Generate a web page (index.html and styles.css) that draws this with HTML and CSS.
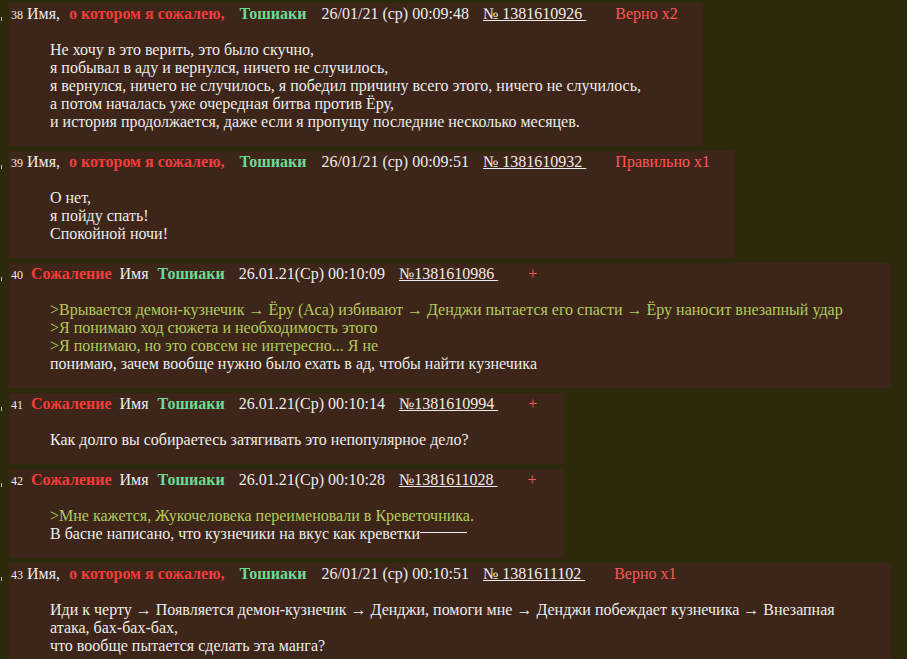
FILE: index.html
```
<!DOCTYPE html>
<html lang="ru">
  <head>
    <meta charset="UTF-8" />
    <meta name="viewport" content="width=device-width, initial-scale=1.0" />
    <title>тред</title>
    <link rel="stylesheet" href="styles.css">
  </head>
  <body>
    <div class="thread">
      <div class="post-row">
        <span class="side"><i></i></span>
        <div class="post">
          <div class="post-head">
            <span class="num">38</span>
            <span class="name">Имя,</span>
            <span class="title">о котором я сожалею,</span>
            <span class="trip">Тошиаки</span>
            <span class="date">26/01/21 (ср) 00:09:48</span>
            <a class="ref">№ 1381610926&nbsp;</a>
            <span class="vote">Верно x2</span>
          </div>
          <div class="message">
            Не хочу в это верить, это было скучно,<br>
            я побывал в аду и вернулся, ничего не случилось,<br>
            я вернулся, ничего не случилось, я победил причину всего этого, ничего не случилось,<br>
            а потом началась уже очередная битва против Ёру,<br>
            и история продолжается, даже если я пропущу последние несколько месяцев.
          </div>
        </div>
      </div>

      <div class="post-row">
        <span class="side"><i></i></span>
        <div class="post">
          <div class="post-head">
            <span class="num">39</span>
            <span class="name">Имя,</span>
            <span class="title">о котором я сожалею,</span>
            <span class="trip">Тошиаки</span>
            <span class="date">26/01/21 (ср) 00:09:51</span>
            <a class="ref">№ 1381610932&nbsp;</a>
            <span class="vote">Правильно x1</span>
          </div>
          <div class="message">
            О нет,<br>
            я пойду спать!<br>
            Спокойной ночи!
          </div>
        </div>
      </div>

      <div class="post-row">
        <span class="side"><i></i></span>
        <div class="post post-full">
          <div class="post-head alt">
            <span class="num">40</span>
            <span class="title">Сожаление</span>
            <span class="name">Имя</span>
            <span class="trip">Тошиаки</span>
            <span class="date">26.01.21(Ср) 00:10:09</span>
            <a class="ref">№1381610986&nbsp;</a>
            <span class="plus">+</span>
          </div>
          <div class="message">
            <span class="quote">&gt;Врывается демон-кузнечик → Ёру (Аса) избивают → Денджи пытается его спасти → Ёру наносит внезапный удар</span><br>
            <span class="quote">&gt;Я понимаю ход сюжета и необходимость этого</span><br>
            <span class="quote">&gt;Я понимаю, но это совсем не интересно... Я не</span><br>
            понимаю, зачем вообще нужно было ехать в ад, чтобы найти кузнечика
          </div>
        </div>
      </div>

      <div class="post-row">
        <span class="side"><i></i></span>
        <div class="post">
          <div class="post-head alt">
            <span class="num">41</span>
            <span class="title">Сожаление</span>
            <span class="name">Имя</span>
            <span class="trip">Тошиаки</span>
            <span class="date">26.01.21(Ср) 00:10:14</span>
            <a class="ref">№1381610994&nbsp;</a>
            <span class="plus">+</span>
          </div>
          <div class="message">
            Как долго вы собираетесь затягивать это непопулярное дело?
          </div>
        </div>
      </div>

      <div class="post-row">
        <span class="side"><i></i></span>
        <div class="post">
          <div class="post-head alt">
            <span class="num">42</span>
            <span class="title">Сожаление</span>
            <span class="name">Имя</span>
            <span class="trip">Тошиаки</span>
            <span class="date">26.01.21(Ср) 00:10:28</span>
            <a class="ref">№1381611028&nbsp;</a>
            <span class="plus">+</span>
          </div>
          <div class="message">
            <span class="quote">&gt;Мне кажется, Жукочеловека переименовали в Креветочника.</span><br>
            В басне написано, что кузнечики на вкус как креветки<span class="strike"></span>
          </div>
        </div>
      </div>

      <div class="post-row">
        <span class="side"><i></i></span>
        <div class="post post-full">
          <div class="post-head">
            <span class="num">43</span>
            <span class="name">Имя,</span>
            <span class="title">о котором я сожалею,</span>
            <span class="trip">Тошиаки</span>
            <span class="date">26/01/21 (ср) 00:10:51</span>
            <a class="ref">№ 1381611102&nbsp;</a>
            <span class="vote">Верно x1</span>
          </div>
          <div class="message">
            Иди к черту → Появляется демон-кузнечик → Денджи, помоги мне → Денджи побеждает кузнечика → Внезапная<br>
            атака, бах-бах-бах,<br>
            что вообще пытается сделать эта манга?
          </div>
        </div>
      </div>
    </div>
  </body>
</html>
```

FILE: styles.css
```
body {
  margin: 0;
  background-color: #2d2a0b;
  color: #ececec;
  font-family: "Liberation Serif", "Times New Roman", serif;
  font-size: 16px;
  line-height: 18px;
}

.thread {
  padding: 3px 16px 0 0;
}

.post-row {
  display: flex;
  align-items: flex-start;
  margin-bottom: 5px;
}

.side {
  flex: 0 0 9px;
  height: 20px;
}

.side i {
  display: block;
  width: 1px;
  height: 4px;
  margin: 14px 0 0 1px;
  background-color: #bdbdbd;
}

.post {
  min-width: 0;
  background-color: #3d2619;
  padding: 2px 25px 0 2px;
}

.post-full {
  flex: 1;
}

.post-head {
  display: flex;
  align-items: baseline;
  white-space: nowrap;
  height: 20px;
}

.num {
  font-size: 12px;
  margin-right: 4px;
}

.post-head .name {
  margin-right: 9px;
}

.post-head .title {
  color: #f23c3c;
  font-weight: bold;
  margin-right: 15px;
}

.trip {
  color: #6ddb97;
  font-weight: bold;
  margin-right: 15px;
}

.date {
  margin-right: 14px;
}

.ref {
  color: #ececec;
  text-decoration: underline;
  margin-right: 29px;
}

.vote {
  color: #ff5656;
}

.alt .num {
  margin-right: 8px;
}

.alt .title {
  margin-right: 8px;
}

.alt .trip {
  margin-right: 14px;
}

.alt .ref {
  margin-right: 30px;
}

.plus {
  color: #ff5656;
  margin-right: 2px;
}

.message {
  margin: 16px 0 15px 39px;
  white-space: nowrap;
}

.quote {
  color: #b2cb5c;
}

.strike {
  display: inline-block;
  width: 47px;
  height: 1px;
  background-color: #ececec;
  vertical-align: 6px;
}
```
